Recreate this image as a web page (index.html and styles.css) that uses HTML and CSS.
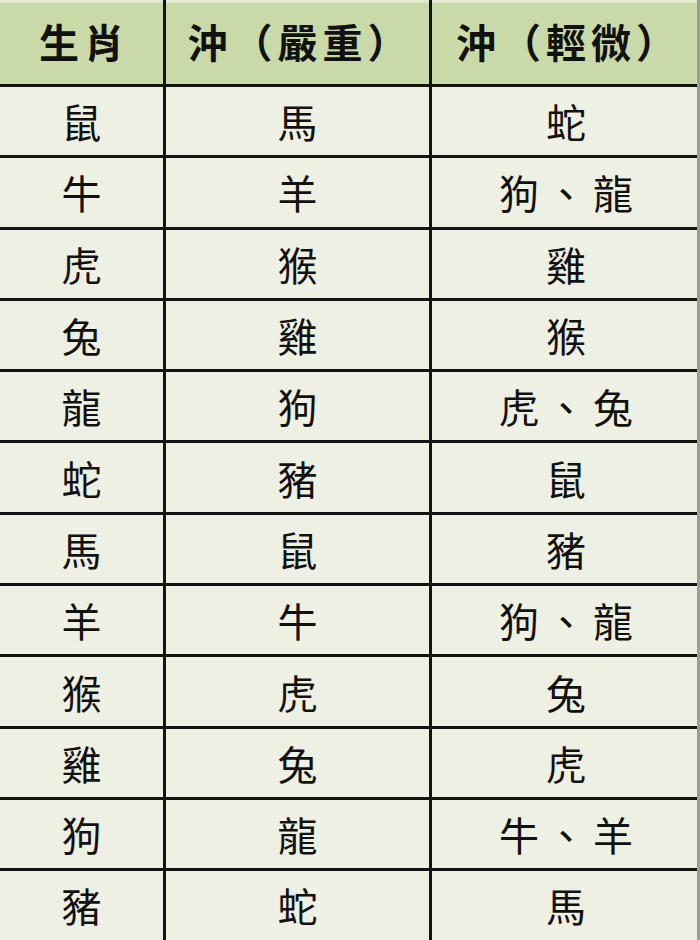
FILE: index.html
```html
<!DOCTYPE html>
<html lang="zh-Hant">
<head>
<meta charset="utf-8">
<title>生肖相沖</title>
<link rel="stylesheet" href="styles.css">
</head>
<body>
<div class="table">
  <div class="cell head">生肖</div>
  <div class="cell head">沖（嚴重）</div>
  <div class="cell head">沖（輕微）</div>

  <div class="cell">鼠</div><div class="cell">馬</div><div class="cell">蛇</div>
  <div class="cell">牛</div><div class="cell">羊</div><div class="cell">狗、龍</div>
  <div class="cell">虎</div><div class="cell">猴</div><div class="cell">雞</div>
  <div class="cell">兔</div><div class="cell">雞</div><div class="cell">猴</div>
  <div class="cell">龍</div><div class="cell">狗</div><div class="cell">虎、兔</div>
  <div class="cell">蛇</div><div class="cell">豬</div><div class="cell">鼠</div>
  <div class="cell">馬</div><div class="cell">鼠</div><div class="cell">豬</div>
  <div class="cell">羊</div><div class="cell">牛</div><div class="cell">狗、龍</div>
  <div class="cell">猴</div><div class="cell">虎</div><div class="cell">兔</div>
  <div class="cell">雞</div><div class="cell">兔</div><div class="cell">虎</div>
  <div class="cell">狗</div><div class="cell">龍</div><div class="cell">牛、羊</div>
  <div class="cell">豬</div><div class="cell">蛇</div><div class="cell">馬</div>
</div>
</body>
</html>
```
FILE: styles.css
```css
html, body {
  margin: 0;
  padding: 0;
  background: #eef0e3;
  overflow: hidden;
}
.table {
  width: 700px;
  height: 940px;
  display: grid;
  grid-template-columns: 163px 263px 268px;
  grid-template-rows: 84px repeat(12, 68.3px);
  column-gap: 3px;
  row-gap: 3px;
  background: #141414;
  border-right: 3px solid #9a9d92;
  box-sizing: border-box;
  font-family: "Noto Sans CJK TC", "Noto Sans CJK SC", sans-serif;
  overflow: hidden;
}
.cell {
  background: #eef0e3;
  color: #111;
  font-size: 40px;
  font-weight: 400;
  line-height: 1;
  letter-spacing: 7px;
  display: flex;
  align-items: center;
  justify-content: center;
  padding-left: 7px;
}
.head {
  background: #c9d9a7;
  font-weight: 700;
  letter-spacing: 5px;
  padding-left: 5px;
  padding-bottom: 2px;
  box-shadow: inset 0 3px 0 #dfe8cc;
}
```
